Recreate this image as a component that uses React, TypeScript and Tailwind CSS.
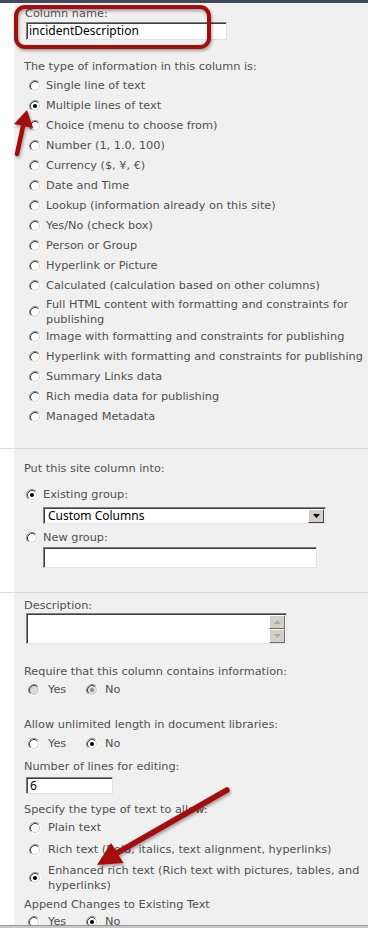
import React from "react"

const inset =
  "bg-white border border-t-[#7f7f7f] border-l-[#7f7f7f] border-r-[#e2e2e2] border-b-[#e2e2e2] shadow-[inset_1px_1px_0_#404040]"

function Radio({ checked, disabled }: { checked?: boolean; disabled?: boolean }) {
  return (
    <svg width="12" height="12" viewBox="0 0 12 12" className="shrink-0">
      <circle cx="6" cy="6" r="5" fill={disabled ? "#dcdad4" : "#ffffff"} />
      <path d="M2.11 9.89A5.5 5.5 0 0 1 9.89 2.11" fill="none" stroke="#8c8c8c" />
      <path d="M9.89 2.11A5.5 5.5 0 0 1 2.11 9.89" fill="none" stroke="#ffffff" />
      <path d="M2.82 9.18A4.5 4.5 0 0 1 9.18 2.82" fill="none" stroke="#404040" />
      <path d="M9.18 2.82A4.5 4.5 0 0 1 2.82 9.18" fill="none" stroke="#d4d0c8" />
      {checked && <circle cx="6" cy="6" r="2" fill={disabled ? "#8a8a8a" : "#000"} />}
    </svg>
  )
}

function Option({ label, checked, tall }: { label: React.ReactNode; checked?: boolean; tall?: boolean }) {
  return (
    <div className={`ml-[5px] flex items-center gap-[5px] ${tall ? "h-[31px] pt-[1px]" : "h-[20px]"}`}>
      <Radio checked={checked} />
      <span className={tall ? "leading-[15px]" : ""}>{label}</span>
    </div>
  )
}

function YesNo({ no, disabled }: { no?: boolean; disabled?: boolean }) {
  return (
    <div className="ml-[4px] flex h-[20px] items-center">
      <Radio disabled={disabled} />
      <span className="ml-[8px] w-[38px]">Yes</span>
      <Radio checked={no} disabled={disabled} />
      <span className="ml-[7px]">No</span>
    </div>
  )
}

function Section({ children, className }: { children: React.ReactNode; className?: string }) {
  return (
    <div className="flex border-b border-[#d9d9d9]">
      <div className="w-[14px] shrink-0 bg-white" />
      <div className={`flex-1 bg-[#f0f0f0] pl-[10px] ${className ?? ""}`}>{children}</div>
    </div>
  )
}

const types = [
  "Single line of text",
  "Multiple lines of text",
  "Choice (menu to choose from)",
  "Number (1, 1.0, 100)",
  "Currency ($, ¥, €)",
  "Date and Time",
  "Lookup (information already on this site)",
  "Yes/No (check box)",
  "Person or Group",
  "Hyperlink or Picture",
  "Calculated (calculation based on other columns)",
]

const types2 = [
  "Image with formatting and constraints for publishing",
  "Hyperlink with formatting and constraints for publishing",
  "Summary Links data",
  "Rich media data for publishing",
  "Managed Metadata",
]

export default function App() {
  return (
    <div className="relative flex h-[928px] w-[368px] flex-col overflow-hidden bg-white font-['DejaVu_Sans',Verdana,sans-serif] text-[11.3px] leading-[14px] text-[#505050]">
      <div className="h-[3px] shrink-0 bg-[#3d4b5c]" />

      <div className="flex-1 overflow-hidden">
        {/* Name and type */}
        <Section className="pb-[21px] pt-[4px]">
          <div className="pl-[1px]">Column name:</div>
          <div className={`ml-[2px] mt-[1px] flex h-[18px] w-[201px] items-center pl-[2px] ${inset}`}>
            <span className="font-['Noto_Sans',sans-serif] text-[12px] text-black">incidentDescription</span>
          </div>
          <div className="mt-[20px]">The type of information in this column is:</div>
          <div className="mt-[2px]">
            {types.map((t) => (
              <Option key={t} label={t} checked={t === "Multiple lines of text"} />
            ))}
            <Option
              tall
              label={
                <>
                  Full HTML content with formatting and constraints for
                  <br />
                  publishing
                </>
              }
            />
            {types2.map((t) => (
              <Option key={t} label={t} />
            ))}
          </div>
        </Section>

        {/* Group */}
        <Section className="pb-[24px] pt-[13px]">
          <div>Put this site column into:</div>
          <div className="ml-[2px] mt-[9px] flex h-[20px] items-center gap-[5px]">
            <Radio checked />
            <span>Existing group:</span>
          </div>
          <div className={`ml-[19px] mt-[2px] flex h-[17px] w-[283px] items-center justify-between pl-[4px] pr-[1px] ${inset}`}>
            <span className="font-['Noto_Sans',sans-serif] text-[12px] leading-[14px] text-black">Custom Columns</span>
            <div className="flex h-[14px] w-[16px] items-center justify-center border border-t-white border-l-white border-r-[#404040] border-b-[#404040] bg-[#d4d0c8]">
              <svg width="7" height="4" viewBox="0 0 7 4">
                <path d="M0 0h7L3.5 4z" fill="#000" />
              </svg>
            </div>
          </div>
          <div className="ml-[2px] mt-[4px] flex h-[19px] items-center gap-[5px]">
            <Radio />
            <span>New group:</span>
          </div>
          <div className={`ml-[19px] h-[21px] w-[274px] ${inset}`} />
        </Section>

        {/* Additional settings */}
        <Section className="pb-[20px] pt-[6px]">
          <div>Description:</div>
          <div className={`ml-[2px] flex h-[31px] w-[261px] justify-end pr-[1px] pt-[1px] ${inset}`}>
            <div className="flex flex-col">
              {["M0 4L3.5 0L7 4z", "M0 0h7L3.5 4z"].map((d) => (
                <div
                  key={d}
                  className="flex h-[14px] w-[16px] items-center justify-center border border-t-white border-l-white border-r-[#6a6a6a] border-b-[#6a6a6a] bg-[#d4d0c8]"
                >
                  <svg width="7" height="4" viewBox="0 0 7 4">
                    <path d={d} fill="#a8a8a8" />
                  </svg>
                </div>
              ))}
            </div>
          </div>

          <div className="mt-[21px]">Require that this column contains information:</div>
          <div className="mt-[1px]">
            <YesNo no disabled />
          </div>

          <div className="mt-[18px]">Allow unlimited length in document libraries:</div>
          <div className="mt-[2px]">
            <YesNo no />
          </div>

          <div className="mt-[6px]">Number of lines for editing:</div>
          <div className={`ml-[2px] mt-[3px] flex h-[17px] w-[87px] items-center pl-[3px] ${inset}`}>
            <span className="font-['Noto_Sans',sans-serif] text-[12px] text-black">6</span>
          </div>

          <div className="mt-[9px]">Specify the type of text to allow:</div>
          <div className="ml-[5px] mt-[1px] flex h-[20px] items-center gap-[7px]">
            <Radio />
            <span>Plain text</span>
          </div>
          <div className="ml-[5px] mt-[2px] flex h-[20px] items-center gap-[7px]">
            <Radio />
            <span>Rich text (Bold, italics, text alignment, hyperlinks)</span>
          </div>
          <div className="ml-[5px] mt-[2px] flex h-[31px] items-center gap-[7px]">
            <Radio checked />
            <span className="leading-[15px]">
              Enhanced rich text (Rich text with pictures, tables, and
              <br />
              hyperlinks)
            </span>
          </div>

          <div className="mt-[5px]">Append Changes to Existing Text</div>
          <YesNo no />
        </Section>
      </div>

      <div className="h-[3px] shrink-0 border-t border-[#9a9a9a] bg-[#c8c8c8]" />

      {/* Annotations */}
      <svg className="pointer-events-none absolute left-0 top-0" width="368" height="928" viewBox="0 0 368 928">
        <defs>
          <filter id="shadow" x="-20%" y="-20%" width="140%" height="140%">
            <feDropShadow dx="1" dy="2" stdDeviation="1.5" floodColor="#000" floodOpacity="0.35" />
          </filter>
        </defs>
        <g filter="url(#shadow)" fill="#a50d11" stroke="#a50d11">
          <rect x="16" y="7" width="193" height="40" rx="9" fill="none" strokeWidth="4" />
          <line x1="17" y1="154" x2="23.5" y2="124" strokeWidth="4.5" strokeLinecap="round" />
          <polygon points="27,110 33,128 14,124" stroke="none" />
          <line x1="227" y1="790" x2="116" y2="853.5" strokeWidth="5.5" strokeLinecap="round" />
          <polygon points="97,865 111,843 123.5,863" stroke="none" />
        </g>
      </svg>
    </div>
  )
}
